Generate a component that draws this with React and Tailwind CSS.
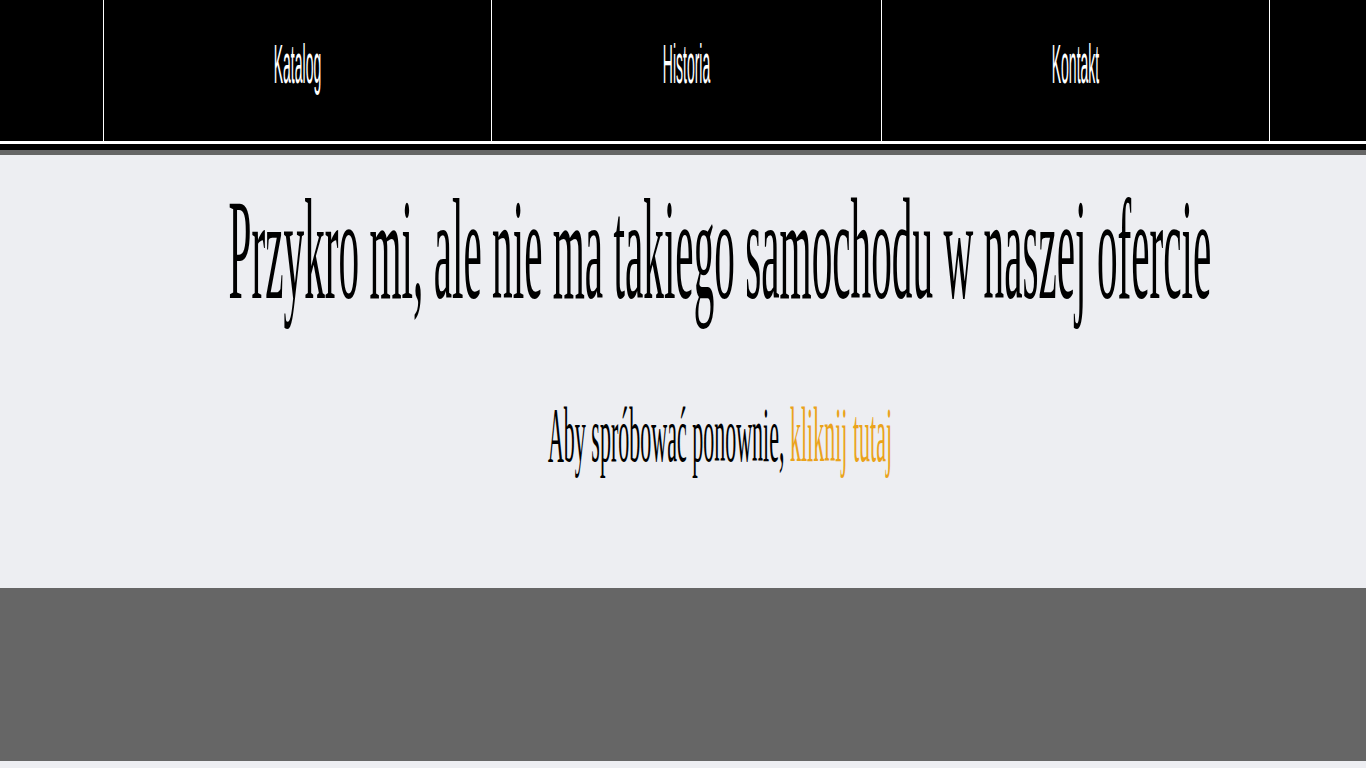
export default function App() {
  const links = ["Katalog", "Historia", "Kontakt"];

  return (
    <div className="min-h-screen bg-[#edeef2]">
      {/* menu */}
      <nav className="grid h-[141px] grid-cols-[103px_388px_390px_388px_1fr] bg-black">
        <div />
        {links.map((link) => (
          <a
            key={link}
            href="#"
            className="flex items-center justify-center border-l border-white pb-[15px] text-white"
          >
            <span className="inline-block origin-center scale-y-[4] font-['Liberation_Sans',Arial,sans-serif] text-[14px] leading-none">
              {link}
            </span>
          </a>
        ))}
        <div className="border-l border-white" />
      </nav>
      <div className="h-[3px] bg-white" />
      <div className="h-[6px] bg-black" />
      <div className="h-[5px] bg-[#666666]" />

      {/* komunikat */}
      <main className="flex h-[433px] flex-col items-center pl-[74px] pt-[76px] font-['Liberation_Serif','Times_New_Roman',serif] text-black">
        <h1 className="flex justify-center whitespace-nowrap">
          <span className="inline-block origin-center scale-y-[3.5] text-[41.25px] leading-none font-normal">
            Przykro mi, ale nie ma takiego samochodu w naszej ofercie
          </span>
        </h1>
        <p className="mt-[153px] flex justify-center whitespace-nowrap">
          <span className="inline-block origin-center scale-y-[3.6] text-[22px] leading-none">
            Aby spróbować ponownie,{" "}
            <a href="#" className="text-[#eaa31b]">
              kliknij tutaj
            </a>
          </span>
        </p>
      </main>

      {/* stopka */}
      <footer className="h-[173px] bg-[#666666]" />
    </div>
  );
}
